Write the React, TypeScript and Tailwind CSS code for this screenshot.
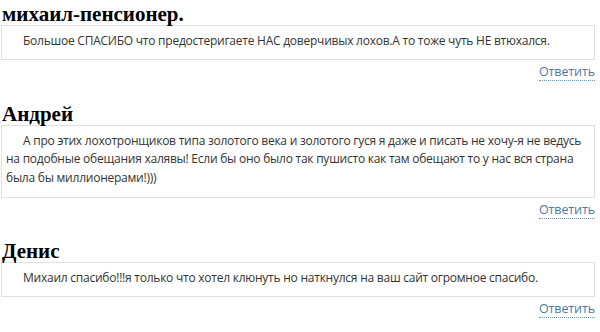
import React from "react";

type C = { name: string; lines: string[]; pb: string; mt: string };

const comments: C[] = [
  {
    name: "михаил-пенсионер.",
    lines: ["Большое СПАСИБО что предостеригаете НАС доверчивых лохов.А то тоже чуть НЕ втюхался."],
    pb: "pb-[8px]",
    mt: "",
  },
  {
    name: "Андрей",
    lines: [
      "А про этих лохотронщиков типа золотого века и золотого гуся я даже и писать не хочу-я не ведусь",
      "на подобные обещания халявы! Если бы оно было так пушисто как там обещают то у нас вся страна",
      "была бы миллионерами!)))",
    ],
    pb: "pb-[10px]",
    mt: "mt-[22px]",
  },
  {
    name: "Денис",
    lines: ["Михаил спасибо!!!я только что хотел клюнуть но наткнулся на ваш сайт огромное спасибо."],
    pb: "pb-[8px]",
    mt: "mt-[21px]",
  },
];

export default function App() {
  return (
    <div className="w-[600px] h-[332px] overflow-hidden bg-white pt-[3px] pl-[1px] pr-[5px]">
      {comments.map((c, i) => (
        <div key={i} className={c.mt}>
          <div className="font-['Liberation_Serif',serif] font-bold text-[21px] leading-[22px] text-black pl-[1px]">
            {c.name}
          </div>
          <div
            className={`border border-[#e0e0e0] pt-[6px] ${c.pb} pl-[4px] pr-[4px] font-['Open_Sans',sans-serif] text-[12px] tracking-[-0.24px] leading-[18.5px] text-[#333] whitespace-nowrap`}
          >
            {c.lines.map((l, j) => (
              <div key={j} className={j === 0 ? "indent-[17px]" : ""}>
                {l}
              </div>
            ))}
          </div>
          <div className="flex justify-end mt-[3px]">
            <span className="font-['Open_Sans',sans-serif] text-[12.5px] tracking-[-0.1px] leading-[17px] text-[#4a78a8] border-b border-dotted border-[#6f92b8]">
              Ответить
            </span>
          </div>
        </div>
      ))}
    </div>
  );
}
